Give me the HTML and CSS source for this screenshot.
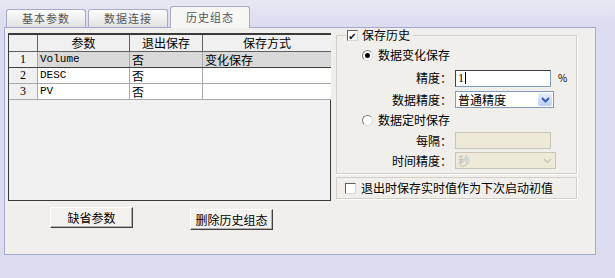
FILE: index.html
```html
<html charset="utf-8">
  <head>
    <title>历史组态</title>
    <link rel="stylesheet" href="styles.css">
  </head>
  <body>
    <div class="tabs">
      <div class="tab">基本参数</div>
      <div class="tab">数据连接</div>
      <div class="tab active">历史组态</div>
    </div>
    <div class="panel">
      <div class="left">
        <div class="grid-box">
          <table class="grid">
            <tr class="head">
              <th class="rh"></th>
              <th class="c1">参数</th>
              <th class="c2">退出保存</th>
              <th class="c3">保存方式</th>
            </tr>
            <tr class="sel">
              <td class="rh">1</td>
              <td class="mono">Volume</td>
              <td>否</td>
              <td>变化保存</td>
            </tr>
            <tr>
              <td class="rh">2</td>
              <td class="mono">DESC</td>
              <td>否</td>
              <td></td>
            </tr>
            <tr>
              <td class="rh">3</td>
              <td class="mono">PV</td>
              <td>否</td>
              <td></td>
            </tr>
          </table>
        </div>
        <div class="buttons">
          <button class="btn">缺省参数</button>
          <button class="btn btn-del">删除历史组态</button>
        </div>
      </div>

      <div class="right">
        <fieldset class="group">
          <legend><span class="check on">✔</span>保存历史</legend>
          <div class="rows">
            <div class="opt"><span class="radio on"></span>数据变化保存</div>
            <div class="field">
              <label>精度：</label>
              <span class="input">1<i class="caret"></i></span>
              <span class="unit">%</span>
            </div>
            <div class="field">
              <label>数据精度：</label>
              <span class="select">普通精度<b class="drop"><svg width="9" height="6" viewBox="0 0 9 6"><path d="M1 1 L4.5 4.5 L8 1" fill="none" stroke="#3a5fb0" stroke-width="2"/></svg></b></span>
            </div>
            <div class="opt"><span class="radio"></span>数据定时保存</div>
            <div class="field">
              <label>每隔：</label>
              <span class="input off"></span>
            </div>
            <div class="field">
              <label>时间精度：</label>
              <span class="select off">秒<b class="drop"><svg width="9" height="6" viewBox="0 0 9 6"><path d="M1 1 L4.5 4.5 L8 1" fill="none" stroke="#c8c8c0" stroke-width="1.5"/></svg></b></span>
            </div>
          </div>
        </fieldset>
        <div class="group2"><span class="check"></span>退出时保存实时值作为下次启动初值</div>
      </div>
    </div>
  </body>
</html>
```

FILE: styles.css
```css
body {
  margin: 0;
  background-color: #dcdcf0;
  font-family: "Noto Sans CJK SC", "DejaVu Sans", sans-serif;
  font-size: 12px;
  line-height: 16px;
  color: #000;
  width: 615px;
  height: 278px;
  overflow: hidden;
}

/* tab strip */
.tabs {
  display: flex;
  align-items: flex-end;
  gap: 2px;
  height: 27px;
  padding-left: 6px;
  background: linear-gradient(#e8e8f4, #dcdcf0);
}
.tab {
  width: 80px;
  height: 18px;
  box-sizing: border-box;
  border: 1px solid #a9abc4;
  border-bottom: none;
  border-radius: 3px 3px 0 0;
  background: linear-gradient(#fdfdfd, #e2e2e4);
  color: #555;
  font-size: 11px;
  letter-spacing: 1px;
  text-align: center;
  line-height: 17px;
}
.tab.active {
  height: 22px;
  line-height: 20px;
  background: #f7f7f5;
  position: relative;
  margin-bottom: -1px;
  z-index: 1;
}

/* main panel */
.panel {
  display: flex;
  width: 592px;
  height: 228px;
  box-sizing: border-box;
  margin-left: 4px;
  border: 1px solid #a4a8d0;
  background-color: #f1efec;
  padding: 5px 0 0 3px;
}

.left { width: 323px; }
.grid-box {
  height: 168px;
  box-sizing: border-box;
  border: 1px solid #3a3a3a;
  border-top-width: 2px;
  background-color: #f0f0f0;
}
.grid {
  font: inherit;
  border-collapse: collapse;
  table-layout: fixed;
  width: 320px;
}
.grid th, .grid td {
  height: 16px;
  padding: 0 2px;
  border: 1px solid #a8a8a8;
  background-color: #fff;
  line-height: 15px;
  white-space: nowrap;
  overflow: hidden;
}
.grid th {
  font-weight: normal;
  background-color: #f0f0f0;
  border-color: #606060;
  border-top: none;
}
.grid th.rh { width: 24px; border-left: none; }
.grid th.c1 { width: 87px; }
.grid th.c2 { width: 68px; }
.grid th.c3 { width: 124px; border-right: none; }
.grid td.rh {
  text-align: center;
  background-color: #f0f0f0;
  border-left: none;
  font-family: "Liberation Serif", serif;
}
.grid td:last-child { border-right: none; }
.grid .mono { font-family: "Liberation Mono", monospace; font-size: 11px; }
.grid tr.sel td {
  background-color: #d9d9d9;
  border-top-color: #404040;
  border-bottom-color: #404040;
}
.grid tr.sel td.rh { background-color: #f0f0f0; }

.buttons {
  display: flex;
  gap: 57px;
  margin: 6px 0 0 42px;
}
.btn {
  width: 83px;
  height: 21px;
  padding: 0;
  font-family: inherit;
  font-size: 12px;
  background-color: #f3f2ef;
  border: 1px solid;
  border-color: #fff #404040 #404040 #fff;
  box-shadow: inset -1px -1px 0 #b0b0b0;
}
.btn-del { margin-top: 2px; }

/* right column */
.right { margin-left: 5px; width: 241px; margin-top: -5px; }
.group {
  margin: 0;
  padding: 0 0 2px 0;
  box-sizing: border-box;
  border: 1px solid #d4d0c8;
  box-shadow: 1px 1px 0 #fff;
}
.group legend {
  margin-left: 10px;
  padding: 0 3px 0 0;
  display: flex;
  align-items: center;
  line-height: 14px;
}
.rows {
  display: grid;
  grid-template-rows: 22px 24px 19px 22px 19px 21px;
  padding-top: 2px;
}
.check {
  display: inline-block;
  width: 11px;
  height: 11px;
  box-sizing: border-box;
  border: 1px solid #606060;
  border-right-color: #d8d8d8;
  border-bottom-color: #d8d8d8;
  background-color: #fff;
  font-size: 10px;
  line-height: 9px;
  text-align: center;
  color: #111;
  margin-right: 4px;
}
.opt {
  display: flex;
  align-items: center;
  padding-left: 25px;
}
.radio {
  display: inline-block;
  width: 11px;
  height: 11px;
  box-sizing: border-box;
  border-radius: 50%;
  border: 1px solid #808080;
  border-right-color: #e0e0e0;
  border-bottom-color: #e0e0e0;
  background-color: #fff;
  margin-right: 5px;
  position: relative;
}
.radio.on::after {
  content: '';
  position: absolute;
  left: 2px;
  top: 2px;
  width: 5px;
  height: 5px;
  border-radius: 50%;
  background-color: #000;
}
.field {
  display: flex;
  align-items: center;
}
.field label {
  width: 115px;
  text-align: right;
  margin-right: 3px;
}
.input, .select {
  display: flex;
  align-items: center;
  height: 17px;
  box-sizing: border-box;
  border: 1px solid #7f9db9;
  border-top-color: #404040;
  border-left-color: #404040;
  background-color: #fff;
  padding-left: 2px;
  font-family: "Liberation Serif", serif;
}
.input { width: 96px; }
.caret {
  display: inline-block;
  width: 1px;
  height: 12px;
  background-color: #000;
  margin-left: 1px;
}
.unit { margin-left: 7px; font-size: 10px; }
.select {
  width: 99px;
  justify-content: space-between;
  border: 1px solid #7f9db9;
  font-family: "Noto Sans CJK SC", sans-serif;
  padding-right: 1px;
}
.drop {
  display: flex;
  align-items: center;
  justify-content: center;
  width: 14px;
  height: 13px;
  background: linear-gradient(#e8effd, #bcd0f4);
  border-radius: 2px;
}
.input.off {
  background-color: #edead8;
  border-color: #c8c6b8;
}
.select.off {
  background-color: #edead8;
  border-color: #c8c6b8;
  color: #c0c0c0;
  width: 101px;
}
.select.off .drop { background: none; }

.group2 {
  display: flex;
  align-items: center;
  margin-top: 3px;
  height: 22px;
  box-sizing: border-box;
  border: 1px solid #d4d0c8;
  box-shadow: 1px 1px 0 #fff;
  padding-left: 8px;
}
.group2 .check { margin-right: 5px; }
```
